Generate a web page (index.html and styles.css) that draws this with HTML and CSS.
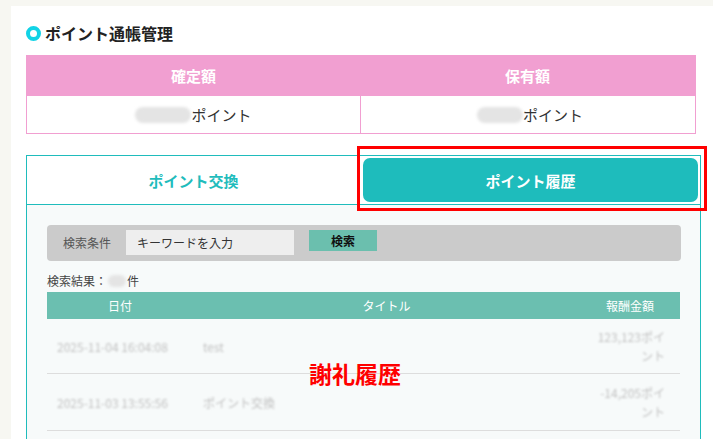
FILE: index.html
```html
<!DOCTYPE html>
<html lang="ja">
<head>
<meta charset="utf-8">
<title>ポイント通帳管理</title>
<link rel="stylesheet" href="styles.css">
</head>
<body>
<div class="card">
  <h1 class="title"><span class="ring"></span>ポイント通帳管理</h1>

  <div class="summary">
    <div class="sum-head">確定額</div>
    <div class="sum-head">保有額</div>
    <div class="sum-val"><span class="blob blob-a"></span>ポイント</div>
    <div class="sum-val sum-val-r"><span class="blob blob-b"></span>ポイント</div>
  </div>

  <div class="panel">
    <div class="tabs">
      <div class="tab">ポイント交換</div>
      <div class="tab-cell"><div class="tab-active">ポイント履歴</div></div>
    </div>
    <div class="panel-body">
      <div class="search">
        <span class="search-label">検索条件</span>
        <span class="search-input">キーワードを入力</span>
        <span class="search-btn">検索</span>
      </div>
      <div class="result">検索結果：<span class="blob blob-c"></span>件</div>
      <table class="history">
        <thead>
          <tr><th class="c-date">日付</th><th class="c-title">タイトル</th><th class="c-amt">報酬金額</th></tr>
        </thead>
        <tbody>
          <tr><td class="d-date blur">2025-11-04 16:04:08</td><td class="d-title blur">test</td><td class="d-amt blur">123,123ポイント</td></tr>
          <tr class="row2"><td class="d-date blur">2025-11-03 13:55:56</td><td class="d-title blur">ポイント交換</td><td class="d-amt blur">-14,205ポイント</td></tr>
        </tbody>
      </table>
    </div>
  </div>
</div>

<div class="mark-box"></div>
<div class="mark-label">謝礼履歴</div>
</body>
</html>
```
FILE: styles.css
```css
html, body {
  margin: 0;
  padding: 0;
}
body {
  background: #f7f7f2;
  font-family: "Noto Sans CJK JP", "Noto Sans", sans-serif;
  color: #333;
  overflow: hidden;
}
.card {
  margin: 6px 0 0 11px;
  background: #fff;
  padding: 15px 0 0 15px;
  min-height: 460px;
}
.title {
  display: flex;
  align-items: center;
  gap: 4px;
  margin: 0;
  height: 24px;
  font-size: 16px;
  font-weight: 700;
  color: #222;
}
.ring {
  flex: 0 0 15px;
  width: 15px;
  height: 15px;
  box-sizing: border-box;
  border: 4px solid #12d3e6;
  border-radius: 50%;
}
.summary {
  margin-top: 10px;
  width: 670px;
  box-sizing: border-box;
  border: 1px solid #f19fd1;
  border-top: none;
  display: grid;
  grid-template-columns: 333px 1fr;
}
.sum-head {
  background: #f19fd1;
  color: #fff;
  font-weight: 700;
  font-size: 15px;
  height: 41px;
  display: flex;
  align-items: center;
  justify-content: center;
}
.sum-val {
  height: 37px;
  display: flex;
  align-items: center;
  justify-content: center;
  font-size: 15px;
  color: #333;
}
.sum-val-r {
  border-left: 1px solid #f19fd1;
}
.blob {
  display: inline-block;
  background: #e4e4e4;
  border-radius: 8px;
  filter: blur(1.5px);
}
.blob-a { width: 56px; height: 16px; }
.blob-b { width: 46px; height: 16px; margin-left: 4px; }
.blob-c { width: 18px; height: 12px; margin: 0 1px; }
.panel {
  margin-top: 21px;
  width: 675px;
  box-sizing: border-box;
  border: 1px solid #1fbcbc;
  border-bottom: none;
}
.tabs {
  display: grid;
  grid-template-columns: 333px 1fr;
  height: 48px;
  border-bottom: 1px solid #1fbcbc;
}
.tab {
  display: flex;
  align-items: center;
  justify-content: center;
  color: #1fbcbc;
  font-size: 15px;
  font-weight: 700;
}
.tab-cell {
  padding: 2px 2px 2px 3px;
}
.tab-active {
  height: 100%;
  background: #1ebcbc;
  border-radius: 7px;
  color: #fff;
  font-size: 15px;
  font-weight: 700;
  display: flex;
  align-items: center;
  justify-content: center;
}
.panel-body {
  background: #f7fafa;
  padding: 20px 19px 20px 20px;
}
.search {
  display: flex;
  align-items: flex-start;
  height: 36px;
  box-sizing: border-box;
  padding: 5px 0 0 16px;
  background: #cbcbcb;
  border-radius: 4px;
  font-size: 12px;
}
.search-label {
  color: #555;
  width: 48px;
  height: 25px;
  line-height: 25px;
}
.search-input {
  margin-left: 15px;
  width: 168px;
  height: 25px;
  line-height: 25px;
  box-sizing: border-box;
  padding-left: 11px;
  background: #eeeeee;
  color: #333;
}
.search-btn {
  margin-left: 15px;
  width: 68px;
  height: 21px;
  line-height: 21px;
  text-align: center;
  background: #6bbfae;
  color: #111;
  font-weight: 700;
}
.result {
  margin-top: 10px;
  height: 20px;
  line-height: 20px;
  font-size: 12px;
  color: #444;
  display: flex;
  align-items: center;
}
.history {
  margin-top: 1px;
  width: 633px;
  border-collapse: collapse;
  font-size: 12px;
  table-layout: fixed;
}
.history th {
  background: #6bbfb0;
  color: #fff;
  font-weight: 400;
  height: 27px;
  padding: 0;
  text-align: center;
}
.c-date { width: 146px; }
.c-amt { width: 100px; }
.history td {
  border-bottom: 1px solid #dddddd;
  padding: 8px 10px;
  line-height: 19px;
  height: 38px;
  vertical-align: middle;
  color: #c2c2c2;
}
.row2 td {
  height: 40px;
}
.d-amt {
  text-align: right;
  padding-right: 15px !important;
}
.blur {
  filter: blur(1.3px);
}
.mark-box {
  position: absolute;
  left: 357px;
  top: 146px;
  width: 350px;
  height: 65px;
  box-sizing: border-box;
  border: 3px solid #ff0000;
}
.mark-label {
  position: absolute;
  left: 309px;
  top: 359px;
  font-size: 23px;
  line-height: 28px;
  font-weight: 700;
  color: #ff0000;
}
```
